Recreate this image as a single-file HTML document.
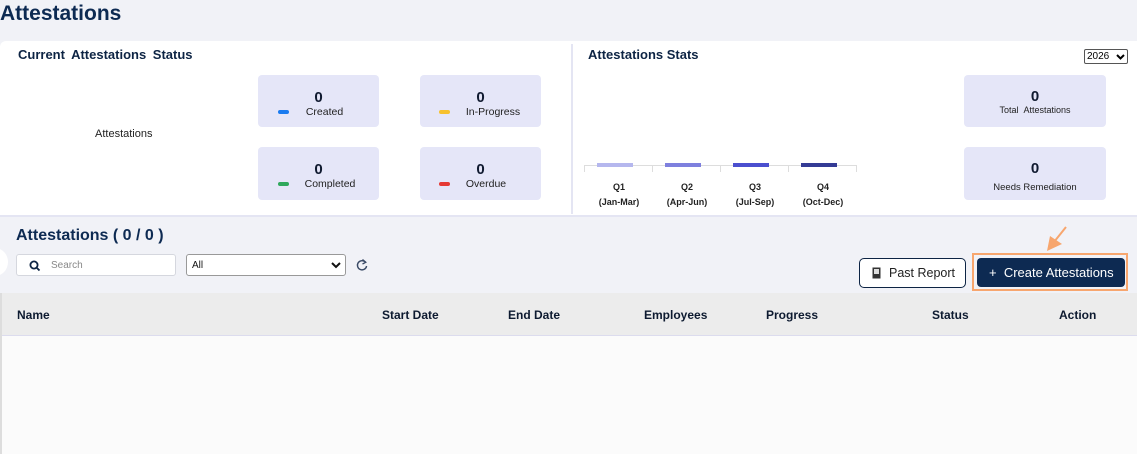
<!DOCTYPE html>
<html><head><meta charset="utf-8"><style>
*{box-sizing:border-box;margin:0;padding:0}
body{width:1137px;height:454px;overflow:hidden;background:#f1f2f7;font-family:"Liberation Sans",sans-serif;color:#0d2444;position:relative}
.a{position:absolute}
h1{position:absolute;left:0;top:2px;font-size:21px;font-weight:bold;color:#0d2a52}
.card{left:0;top:41px;width:1137px;height:176px;background:#fff;border-radius:6px 0 0 0;border-bottom:2px solid #e4e5f3}
.sc{position:absolute;background:#e5e6f8;border-radius:4px;text-align:center}
.num{font-size:15px;font-weight:bold;color:#101a30}
.lbl{font-size:10.5px;color:#222}
.dash{position:absolute;width:11px;height:4px;border-radius:2px}
.q{position:absolute;top:180px;width:68px;text-align:center;font-size:9px;font-weight:bold;color:#222;line-height:15px}
.bar{position:absolute;top:162px;width:36px;height:4px}
.hd{position:absolute;top:308px;font-size:12px;font-weight:bold;color:#0d1a30}
</style></head><body>
<h1>Attestations</h1>
<div class="a card">
  <div class="a" style="left:18px;top:6px;font-size:13px;font-weight:bold;word-spacing:3px">Current Attestations Status</div>
  <div class="a" style="left:95px;top:87px;font-size:11px;color:#222">Attestations</div>
  <div class="sc" style="left:258px;top:34px;width:121px;height:52px"><div class="num" style="margin-top:14px">0</div><div class="lbl" style="margin-left:12px">Created</div><div class="dash" style="left:20px;top:35px;background:#1a7bf0"></div></div>
  <div class="sc" style="left:420px;top:34px;width:121px;height:52px"><div class="num" style="margin-top:14px">0</div><div class="lbl" style="margin-left:25px">In-Progress</div><div class="dash" style="left:19px;top:35px;background:#f7c12e"></div></div>
  <div class="sc" style="left:258px;top:106px;width:121px;height:53px"><div class="num" style="margin-top:14px">0</div><div class="lbl" style="margin-left:23px">Completed</div><div class="dash" style="left:20px;top:35px;background:#2fa85c"></div></div>
  <div class="sc" style="left:420px;top:106px;width:121px;height:53px"><div class="num" style="margin-top:14px">0</div><div class="lbl" style="margin-left:11px">Overdue</div><div class="dash" style="left:19px;top:35px;background:#e53935"></div></div>
  <div class="a" style="left:571px;top:3px;width:2px;height:170px;background:#e4e5f3"></div>
  <div class="a" style="left:588px;top:6px;font-size:13px;font-weight:bold">Attestations Stats</div>
  <div class="a" style="left:1084px;top:8px;width:44px;height:15px;border:1px solid #555;border-radius:2px;font-size:10px;color:#000;padding:1px 0 0 2px">2026</div>
  <svg class="a" style="left:1116px;top:13px" width="9" height="6" viewBox="0 0 9 6"><path d="M1 1L4.5 4.5 8 1" fill="none" stroke="#000" stroke-width="2"/></svg>
  <div class="sc" style="left:964px;top:34px;width:142px;height:52px"><div class="num" style="margin-top:13px">0</div><div class="lbl" style="font-size:9px;word-spacing:3px">Total Attestations</div></div>
  <div class="sc" style="left:964px;top:106px;width:142px;height:53px"><div class="num" style="margin-top:13px">0</div><div class="lbl" style="font-size:9.5px;margin-top:5px">Needs Remediation</div></div>
  <div class="a" style="left:584px;top:124px;width:272px;height:1px;background:#ddd"></div>
  <div class="a" style="left:584px;top:124px;width:1px;height:7px;background:#ddd"></div>
  <div class="a" style="left:652px;top:124px;width:1px;height:7px;background:#ddd"></div>
  <div class="a" style="left:720px;top:124px;width:1px;height:7px;background:#ddd"></div>
  <div class="a" style="left:788px;top:124px;width:1px;height:7px;background:#ddd"></div>
  <div class="a" style="left:856px;top:124px;width:1px;height:7px;background:#ddd"></div>
  <div class="bar" style="left:597px;top:122px;background:#b5b7ee"></div>
  <div class="bar" style="left:665px;top:122px;background:#7e80de"></div>
  <div class="bar" style="left:733px;top:122px;background:#4b4fcf"></div>
  <div class="bar" style="left:801px;top:122px;background:#343b95"></div>
  <div class="q" style="left:585px;top:139px">Q1<br>(Jan-Mar)</div>
  <div class="q" style="left:653px;top:139px">Q2<br>(Apr-Jun)</div>
  <div class="q" style="left:721px;top:139px">Q3<br>(Jul-Sep)</div>
  <div class="q" style="left:789px;top:139px">Q4<br>(Oct-Dec)</div>
</div>
<div class="a" style="left:16px;top:227px;font-size:16px;font-weight:bold;color:#0d2a52">Attestations ( 0 / 0 )</div>
<div class="a" style="left:-18px;top:248px;width:26px;height:28px;border-radius:50%;background:#fff"></div>
<div class="a" style="left:16px;top:254px;width:160px;height:22px;background:#fff;border:1px solid #d5d7de;border-radius:3px">
  <svg class="a" style="left:12px;top:5px" width="12" height="12" viewBox="0 0 12 12"><circle cx="5" cy="5" r="3.6" fill="none" stroke="#0d2444" stroke-width="1.8"/><path d="M7.6 7.6L10.5 10.5" stroke="#0d2444" stroke-width="1.8"/></svg>
  <span class="a" style="left:34px;top:5px;font-size:10px;color:#888">Search</span></div>
<div class="a" style="left:186px;top:254px;width:160px;height:22px;background:#fff;border:1px solid #999;border-radius:3px;font-size:10px;color:#111;padding:5px 0 0 5px">All</div>
<svg class="a" style="left:331px;top:262px" width="10" height="7" viewBox="0 0 10 7"><path d="M1 1L5 5 9 1" fill="none" stroke="#111" stroke-width="2"/></svg>
<svg class="a" style="left:355px;top:258px" width="14" height="14" viewBox="0 0 14 14"><path d="M10.5 4.2A4.6 4.6 0 1 0 11.6 8" fill="none" stroke="#3a4a66" stroke-width="1.4"/><path d="M7.5 1.5L10.8 4.3 7.5 6" fill="none" stroke="#3a4a66" stroke-width="1.3"/></svg>
<div class="a" style="left:859px;top:258px;width:107px;height:30px;border:1px solid #0d2444;border-radius:5px;background:#fff;font-size:12.5px;color:#222;padding:7px 0 0 29px">Past Report</div>
<svg class="a" style="left:872px;top:267px" width="9" height="12" viewBox="0 0 9 12"><rect x="0.5" y="0.5" width="8" height="11" fill="#333"/><rect x="2" y="2" width="5" height="5" fill="#ddd"/></svg>
<div class="a" style="left:972px;top:253px;width:156px;height:38px;border:2px solid #f7a66e"></div>
<div class="a" style="left:977px;top:258px;width:148px;height:29px;background:#0d2a52;border-radius:4px;color:#fff;font-size:13px;padding:7px 0 0 12px">+&nbsp; Create Attestations</div>
<svg class="a" style="left:1040px;top:224px" width="30" height="30" viewBox="0 0 30 30"><path d="M26 3L14 18" stroke="#f7a66e" stroke-width="2"/><path d="M7 27L10 12 22 20Z" fill="#f7a66e"/></svg>
<div class="a" style="left:0;top:293px;width:1137px;height:161px;background:#fbfbfb;border-left:2px solid #ddd"></div>
<div class="a" style="left:2px;top:293px;width:1135px;height:43px;background:#ececec;border-bottom:1px solid #dcdcee"></div>
<div class="hd" style="left:17px">Name</div>
<div class="hd" style="left:382px">Start Date</div>
<div class="hd" style="left:508px">End Date</div>
<div class="hd" style="left:644px">Employees</div>
<div class="hd" style="left:766px">Progress</div>
<div class="hd" style="left:932px">Status</div>
<div class="hd" style="left:1059px">Action</div>
</body></html>
